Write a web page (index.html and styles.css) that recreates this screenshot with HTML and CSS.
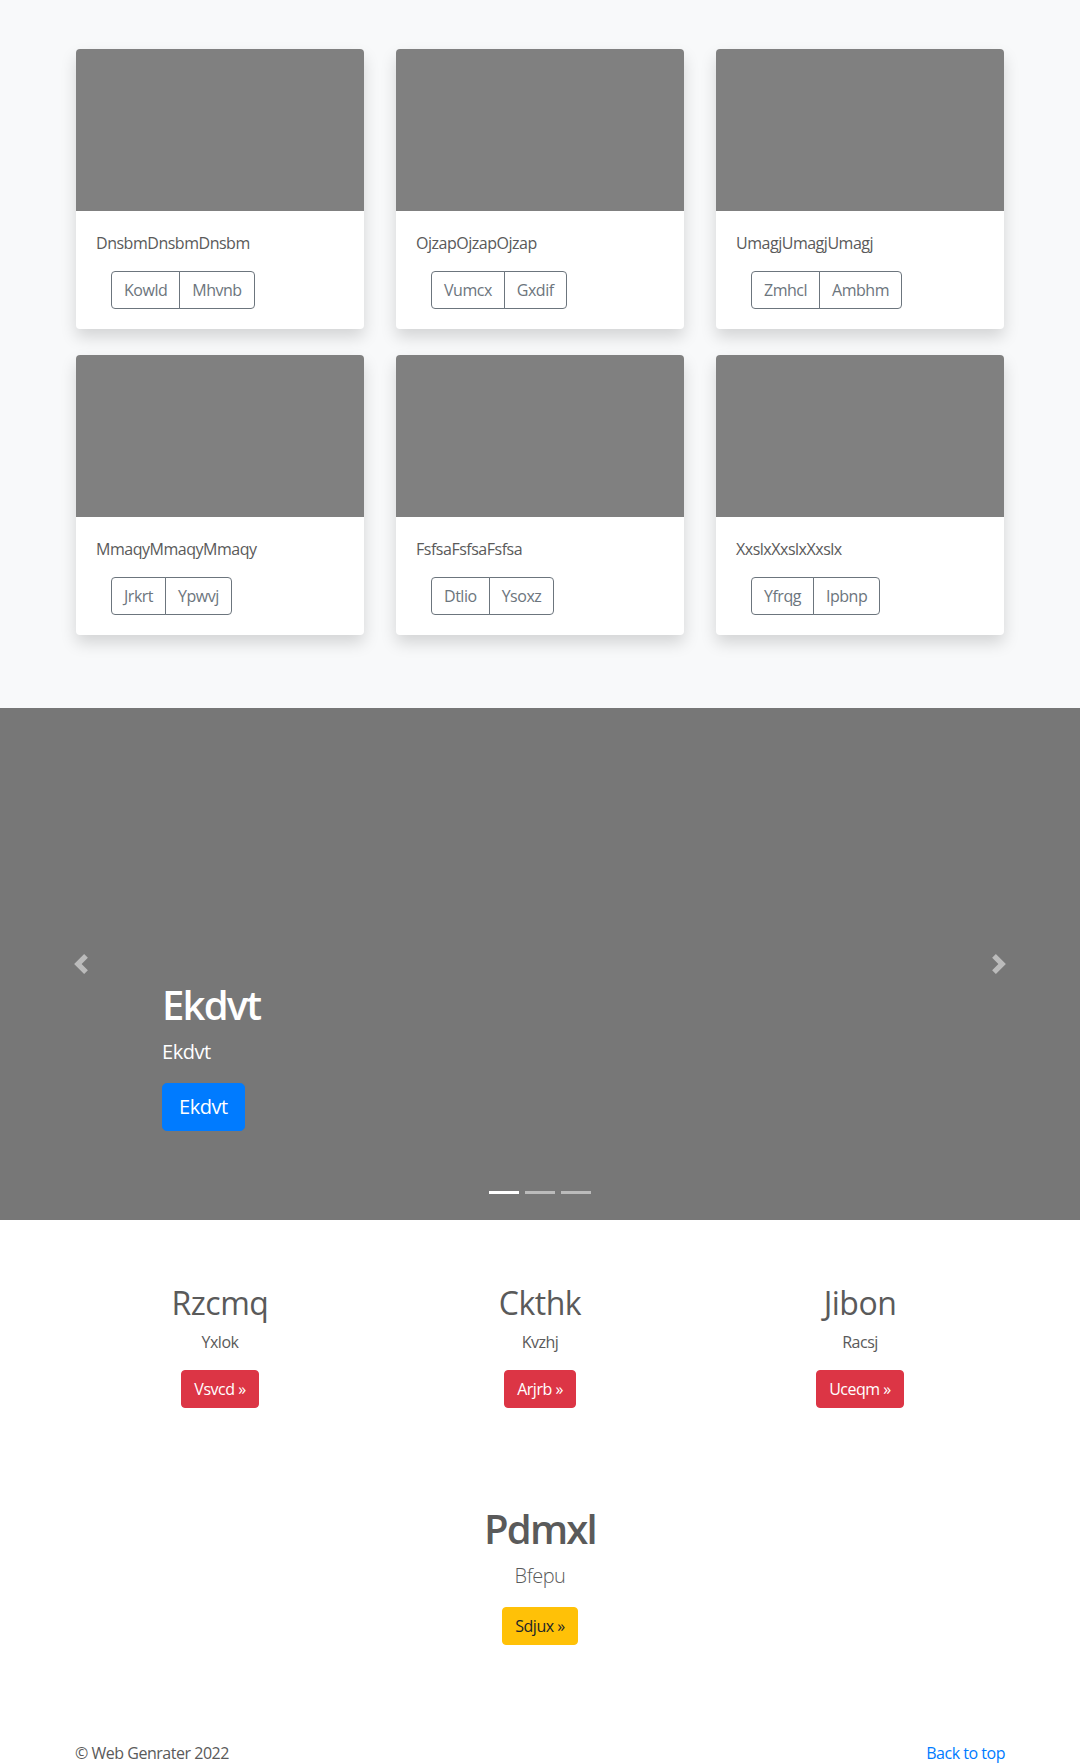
FILE: index.html
```html
<!DOCTYPE html>
<html lang="en">
<head>
<meta charset="utf-8">
<title>Album</title>
<link rel="stylesheet" href="styles.css">
</head>
<body>
<section class="album">
  <div class="cards">
    <div class="card"><div class="thumb"></div><div class="card-body"><p class="card-text">DnsbmDnsbmDnsbm</p><div class="btn-group"><span class="btn-o">Kowld</span><span class="btn-o">Mhvnb</span></div></div></div>
    <div class="card"><div class="thumb"></div><div class="card-body"><p class="card-text">OjzapOjzapOjzap</p><div class="btn-group"><span class="btn-o">Vumcx</span><span class="btn-o">Gxdif</span></div></div></div>
    <div class="card"><div class="thumb"></div><div class="card-body"><p class="card-text">UmagjUmagjUmagj</p><div class="btn-group"><span class="btn-o">Zmhcl</span><span class="btn-o">Ambhm</span></div></div></div>
    <div class="card"><div class="thumb"></div><div class="card-body"><p class="card-text">MmaqyMmaqyMmaqy</p><div class="btn-group"><span class="btn-o">Jrkrt</span><span class="btn-o">Ypwvj</span></div></div></div>
    <div class="card"><div class="thumb"></div><div class="card-body"><p class="card-text">FsfsaFsfsaFsfsa</p><div class="btn-group"><span class="btn-o">Dtlio</span><span class="btn-o">Ysoxz</span></div></div></div>
    <div class="card"><div class="thumb"></div><div class="card-body"><p class="card-text">XxslxXxslxXxslx</p><div class="btn-group"><span class="btn-o">Yfrqg</span><span class="btn-o">Ipbnp</span></div></div></div>
  </div>
</section>

<section class="carousel">
  <div class="ctrl">
    <svg class="ctrl-icon" viewBox="0 0 8 8" width="20" height="20"><path fill="#fff" d="M5.25 0l-4 4 4 4 1.5-1.5L4.25 4l2.5-2.5L5.25 0z"/></svg>
  </div>
  <div class="mid">
    <div class="caption">
      <h1 class="cap-title">Ekdvt</h1>
      <p class="cap-text">Ekdvt</p>
      <p class="cap-action"><span class="btn-lg">Ekdvt</span></p>
    </div>
    <ol class="indicators">
      <li class="active"></li>
      <li></li>
      <li></li>
    </ol>
  </div>
  <div class="ctrl">
    <svg class="ctrl-icon" viewBox="0 0 8 8" width="20" height="20"><path fill="#fff" d="M2.75 0l-1.5 1.5L3.75 4l-2.5 2.5L2.75 8l4-4-4-4z"/></svg>
  </div>
</section>

<section class="marketing">
  <div class="col">
    <h2 class="m-title">Rzcmq</h2>
    <p class="m-text">Yxlok</p>
    <span class="btn btn-danger">Vsvcd »</span>
  </div>
  <div class="col">
    <h2 class="m-title">Ckthk</h2>
    <p class="m-text">Kvzhj</p>
    <span class="btn btn-danger">Arjrb »</span>
  </div>
  <div class="col">
    <h2 class="m-title">Jibon</h2>
    <p class="m-text">Racsj</p>
    <span class="btn btn-danger">Uceqm »</span>
  </div>
</section>

<section class="feature">
  <h1 class="f-title">Pdmxl</h1>
  <p class="lead">Bfepu</p>
  <span class="btn btn-warning">Sdjux »</span>
</section>

<footer class="footer">
  <p class="copy">© Web Genrater 2022</p>
  <a class="top-link" href="#">Back to top</a>
</footer>
</body>
</html>
```

FILE: styles.css
```css
* { box-sizing: border-box; }

html, body { margin: 0; padding: 0; }

body {
  font-family: "Open Sans", "Noto Sans", sans-serif;
  font-size: 16px;
  line-height: 1.5;
  color: #5a5a5a;
  background: #fff;
  letter-spacing: -0.03em;
}

p, h1, h2 { margin: 0; }

/* Album */
.album {
  background: #f8f9fa;
  padding: 49px 0 73px;
}

.cards {
  width: 928px;
  margin: 0 auto;
  display: grid;
  grid-template-columns: repeat(3, 288px);
  column-gap: 32px;
  row-gap: 26px;
}

.card {
  background: #fff;
  border-radius: 4px;
  box-shadow: 0 8px 16px rgba(0, 0, 0, 0.15);
  overflow: hidden;
  height: 280px;
}

.thumb {
  height: 162px;
  background: #808080;
}

.card-body {
  padding: 20px;
}

.card-text {
  margin-bottom: 16px;
  line-height: 24px;
}

.btn-group {
  display: inline-flex;
  margin-left: 15px;
}

.btn-o {
  display: inline-block;
  padding: 6px 12px;
  line-height: 24px;
  border: 1px solid #6c757d;
  color: #6c757d;
  font-size: 16px;
}

.btn-o:first-child {
  border-radius: 4px 0 0 4px;
}

.btn-o + .btn-o {
  margin-left: -1px;
  border-radius: 0 4px 4px 0;
}

/* Carousel */
.carousel {
  height: 512px;
  background: #777;
  display: grid;
  grid-template-columns: 15% 1fr 15%;
  margin-bottom: 64px;
}

.ctrl {
  display: flex;
  align-items: center;
  justify-content: center;
  opacity: 0.5;
}

.ctrl-icon { display: block; }

.mid {
  display: flex;
  flex-direction: column;
  padding-top: 273px;
}

.caption {
  color: #fff;
}

.cap-title {
  font-size: 40px;
  font-weight: 600;
  line-height: 48px;
  margin-bottom: 8px;
  letter-spacing: -0.045em;
}

.cap-text {
  font-size: 20px;
  line-height: 30px;
  margin-bottom: 16px;
}

.cap-action { margin-bottom: 0; }

.btn-lg {
  display: inline-block;
  background: #007bff;
  color: #fff;
  font-size: 20px;
  line-height: 30px;
  padding: 8px 16px;
  border: 1px solid #007bff;
  border-radius: 4.8px;
}

.indicators {
  list-style: none;
  margin: 50px 0 0;
  padding: 0;
  display: flex;
  justify-content: center;
}

.indicators li {
  width: 30px;
  height: 23px;
  margin: 0 3px;
  border-top: 10px solid transparent;
  border-bottom: 10px solid transparent;
  background: #fff;
  background-clip: padding-box;
  opacity: 0.5;
}

.indicators li.active { opacity: 1; }

/* Marketing */
.marketing {
  width: 960px;
  margin: 0 auto;
  display: grid;
  grid-template-columns: repeat(3, 1fr);
  text-align: center;
}

.col { margin-bottom: 24px; }

.m-title {
  font-size: 32px;
  font-weight: 500;
  line-height: 38px;
  margin-bottom: 8px;
}

.m-text {
  margin-bottom: 16px;
  line-height: 24px;
}

.btn {
  display: inline-block;
  padding: 6px 12px;
  line-height: 24px;
  font-size: 16px;
  border-radius: 4px;
  border: 1px solid transparent;
}

.btn-danger {
  background: #dc3545;
  border-color: #dc3545;
  color: #fff;
}

.btn-warning {
  background: #ffc107;
  border-color: #ffc107;
  color: #212529;
}

/* Feature */
.feature {
  text-align: center;
  padding-top: 73px;
}

.f-title {
  font-size: 40px;
  font-weight: 600;
  line-height: 48px;
  margin-bottom: 8px;
  letter-spacing: -0.045em;
}

.lead {
  font-size: 20px;
  font-weight: 300;
  line-height: 30px;
  margin-bottom: 16px;
}

/* Footer */
.footer {
  width: 930px;
  margin: 0 auto;
  padding-top: 96px;
  padding-bottom: 48px;
  display: flex;
  justify-content: space-between;
  line-height: 24px;
}

.top-link {
  color: #007bff;
  text-decoration: none;
}
```
